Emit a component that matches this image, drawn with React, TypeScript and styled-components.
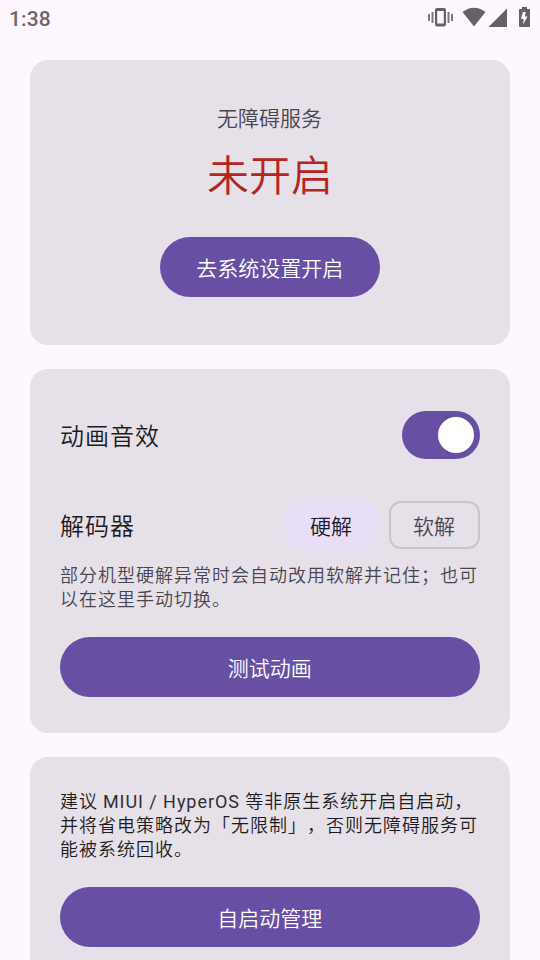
import React, { useState } from 'react';
import styled, { createGlobalStyle } from 'styled-components';

const Global = createGlobalStyle`
  * { box-sizing: border-box; }
  body {
    margin: 0; background: #fef7ff; overflow: hidden; text-spacing-trim: space-all; font-weight: 350;
    font-family: Roboto, "Noto Sans CJK SC", sans-serif;
  }
  button { font-family: inherit; font-weight: inherit; border: 0; padding: 0; }
`;
const Screen = styled.main`
  width: 540px; height: 960px; overflow: hidden; display: flex; flex-direction: column;
`;
const StatusBar = styled.header`
  height: 36px; flex: none; display: flex; justify-content: space-between; padding: 0 9px 0 9px;
  color: #666167;
`;
const Clock = styled.time`
  font-size: 21px; font-weight: 500; line-height: 38px; letter-spacing: 0.15px; color: #6b666d;
`;
const StatusIcons = styled.svg`
  width: 104px; height: 36px; display: block; fill: currentColor;
`;
const Content = styled.div`
  padding: 24px 30px 0; display: flex; flex-direction: column; gap: 24px;
`;
const Card = styled.section<{ $height: number; $top: number; $center?: boolean }>`
  flex: none; height: ${p => p.$height}px; padding: ${p => p.$top}px 30px 0; border-radius: 18px;
  background: #e6e0e9; display: flex; flex-direction: column; align-items: ${p => (p.$center ? 'center' : 'stretch')};
`;
const Label = styled.div`
  font-size: 21px; line-height: 30px; color: #49454f; padding-right: 1px;
`;
const Status = styled.div`
  font-size: 42px; line-height: 54px; margin-top: 16px; color: #b3261e;
`;
const PillButton = styled.button<{ $width?: number; $top: number }>`
  width: ${p => (p.$width ? p.$width + 'px' : '100%')}; height: 60px; margin-top: ${p => p.$top}px; flex: none;
  border-radius: 30px; background: #6750a4; color: #fff; font-size: 21px; line-height: 56px;
  padding: 4px 0.5px 0 0;
`;
const Row = styled.div<{ $top?: number }>`
  height: 48px; margin-top: ${p => p.$top ?? 0}px; display: flex; align-items: center; justify-content: space-between;
`;
const RowTitle = styled.div`
  font-size: 24px; letter-spacing: 1px; line-height: 44px; padding-top: 4px; color: #1d1b20;
`;
const Switch = styled.button<{ $on: boolean }>`
  width: 78px; height: 48px; padding: 0 6px; border-radius: 24px; background: ${p => (p.$on ? '#6750a4' : '#79747e')};
  display: flex; align-items: center; justify-content: ${p => (p.$on ? 'flex-end' : 'flex-start')};
`;
const Thumb = styled.span`
  width: 36px; height: 36px; border-radius: 50%; background: #fff;
`;
const Options = styled.div`
  display: flex; gap: 12px;
`;
const Option = styled.button<{ $selected: boolean }>`
  width: 91px; height: 48px; border-radius: 12px; font-size: 21px; line-height: 40px; padding: 4px 1px 0 0;
  border: 2px solid ${p => (p.$selected ? '#e8def8' : '#cac4d0')};
  background: ${p => (p.$selected ? '#e8def8' : 'transparent')}; color: ${p => (p.$selected ? '#1d192b' : '#49454f')};
`;
const Note = styled.p<{ $strong?: boolean; $top?: number }>`
  margin: ${p => p.$top ?? 0}px 0 0; font-size: 18px; line-height: 24px; letter-spacing: 1px; white-space: nowrap;
  color: ${p => (p.$strong ? '#1d1b20' : '#49454f')};
`;
const Latin = styled.span`
  font-weight: 400; letter-spacing: 0.95px; color: #302e33; margin-left: -0.5px;
`;

export default function App() {
  const [sound, setSound] = useState(true);
  const [decoder, setDecoder] = useState('硬解');
  return (
    <Screen lang="zh-CN">
      <Global />
      <StatusBar>
        <Clock>1:38</Clock>
        <StatusIcons viewBox="427 0 104 36">
          <path d="M428 14h2v7h-2zM431.500 12h2v11h-2zM447.500 12h2v11h-2zM451 14h2v7h-2z" opacity=".85" />
          <path fillRule="evenodd" d="M437 8h7q2 0 2 2v14.500q0 2-2 2h-7q-2 0-2-2V10q0-2 2-2zm.2 3v12.500h6.600V11z" />
          <path d="M462.500 12Q474 3.500 485.500 12L474 26.500z" />
          <path d="M507 8.500v18.500h-18.500z" />
          <path fillRule="evenodd" d="M522 7h5v2h2q1 0 1 1v16q0 1-1 1h-9q-1 0-1-1V10q0-1 1-1h2zm.8 5l-1.800 7h2.700l-.7 5.500 4.500-8h-2.700l1-4.500z" />
        </StatusIcons>
      </StatusBar>
      <Content>
        <Card $height={285} $top={44} $center>
          <Label>无障碍服务</Label>
          <Status>未开启</Status>
          <PillButton $width={220} $top={33}>去系统设置开启</PillButton>
        </Card>
        <Card $height={364} $top={42}>
          <Row>
            <RowTitle>动画音效</RowTitle>
            <Switch $on={sound} role="switch" aria-checked={sound} onClick={() => setSound(!sound)}><Thumb /></Switch>
          </Row>
          <Row $top={42}>
            <RowTitle>解码器</RowTitle>
            <Options>
              {['硬解', '软解'].map(name => (
                <Option key={name} $selected={decoder === name} onClick={() => setDecoder(name)}>{name}</Option>
              ))}
            </Options>
          </Row>
          <Note $top={15}>部分机型硬解异常时会自动改用软解并记住；也可<br />以在这里手动切换。</Note>
          <PillButton $top={25}>测试动画</PillButton>
        </Card>
        <Card $height={285} $top={33}>
          <Note $strong>建议<Latin> MIUI / HyperOS </Latin>等非原生系统开启自启动，<br />并将省电策略改为「无限制」，否则无障碍服务可<br />能被系统回收。</Note>
          <PillButton $top={25}>自启动管理</PillButton>
        </Card>
      </Content>
    </Screen>
  );
}
